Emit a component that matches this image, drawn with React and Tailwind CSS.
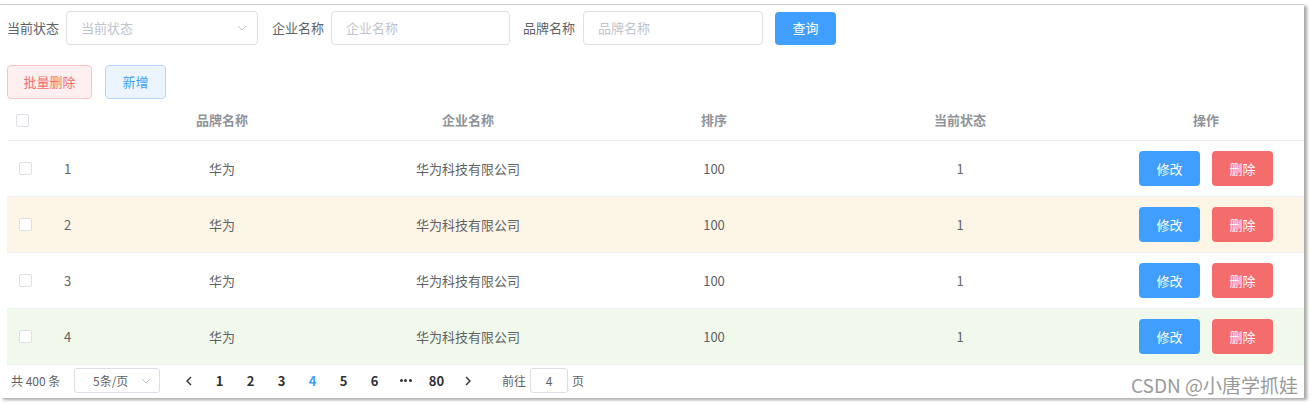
import React from "react";

const rows = [
  { id: 1, brand: "华为", company: "华为科技有限公司", order: 100, status: 1, bg: "bg-white" },
  { id: 2, brand: "华为", company: "华为科技有限公司", order: 100, status: 1, bg: "bg-[#fdf5e6]" },
  { id: 3, brand: "华为", company: "华为科技有限公司", order: 100, status: 1, bg: "bg-white" },
  { id: 4, brand: "华为", company: "华为科技有限公司", order: 100, status: 1, bg: "bg-[#f0f9eb]" },
];

const pages = ["1", "2", "3", "4", "5", "6", "more", "80"];

const Arrow = ({ className }) => (
  <svg className={className} width="10" height="6" viewBox="0 0 10 6" fill="none">
    <polyline points="1,1 5,5 9,1" stroke="#c0c4cc" strokeWidth="1" />
  </svg>
);

const Checkbox = () => (
  <span className="block w-[13px] h-[13px] border border-[#dcdfe6] rounded-[2px] bg-white" />
);

const Input = ({ placeholder, width }) => (
  <div
    className={`${width} h-[34px] border border-[#dcdfe6] rounded-[4px] flex items-center px-[14px] text-[13px] text-[#c0c4cc]`}
  >
    {placeholder}
  </div>
);

const App = () => {
  return (
    <div className="w-[1314px] h-[404px] bg-white pt-[4px] font-['Noto_Sans_CJK_SC',sans-serif]">
      <div className="relative w-[1304px] h-[394px] bg-white border-t border-[#cfcfcf] shadow-[3px_2px_3px_rgba(0,0,0,0.35)] overflow-hidden">
        {/* search form */}
        <div className="flex items-center mt-[6px] pl-[7px] h-[34px] text-[13px] text-[#606266]">
          <span className="w-[59px]">当前状态</span>
          <div className="w-[192px] h-[34px] border border-[#dcdfe6] rounded-[4px] flex items-center justify-between pl-[14px] pr-[10px] text-[#c0c4cc]">
            <span>当前状态</span>
            <Arrow />
          </div>
          <span className="ml-[14px] w-[59px]">企业名称</span>
          <Input placeholder="企业名称" width="w-[179px]" />
          <span className="ml-[13px] w-[60px]">品牌名称</span>
          <Input placeholder="品牌名称" width="w-[180px]" />
          <button className="ml-[12px] w-[61px] h-[33px] rounded-[4px] bg-[#409eff] text-white text-[13px]">
            查询
          </button>
        </div>

        {/* actions */}
        <div className="flex items-center gap-[13px] mt-[20px] pl-[7px]">
          <button className="w-[85px] h-[34px] rounded-[4px] bg-[#fef0f0] border border-[#fbc4c4] text-[#f56c6c] text-[13px]">
            批量删除
          </button>
          <button className="w-[61px] h-[34px] rounded-[4px] bg-[#ecf5ff] border border-[#b3d8ff] text-[#409eff] text-[13px]">
            新增
          </button>
        </div>

        {/* table */}
        <div className="mt-[1px] ml-[7px] w-[1322px] text-[13px]">
          <div className="grid grid-cols-[46px_46px_246px_246px_246px_246px_246px] h-[41px] items-center border-b border-[#ebeef5] font-bold text-[#909399]">
            <div className="pl-[9px]">
              <Checkbox />
            </div>
            <div />
            <div className="text-center">品牌名称</div>
            <div className="text-center">企业名称</div>
            <div className="text-center">排序</div>
            <div className="text-center">当前状态</div>
            <div className="text-center">操作</div>
          </div>
          {rows.map((row) => (
            <div
              key={row.id}
              className={`grid grid-cols-[46px_46px_246px_246px_246px_246px_246px] h-[56px] items-center border-b border-[#ebeef5] text-[#606266] ${row.bg}`}
            >
              <div className="pl-[12px]">
                <Checkbox />
              </div>
              <div className="pl-[11px]">{row.id}</div>
              <div className="text-center">{row.brand}</div>
              <div className="text-center">{row.company}</div>
              <div className="text-center">{row.order}</div>
              <div className="text-center">{row.status}</div>
              <div className="flex justify-center gap-[12px]">
                <button className="w-[61px] h-[35px] rounded-[4px] bg-[#409eff] text-white text-[13px]">
                  修改
                </button>
                <button className="w-[61px] h-[35px] rounded-[4px] bg-[#f56c6c] text-white text-[13px]">
                  删除
                </button>
              </div>
            </div>
          ))}
        </div>

        {/* pagination */}
        <div className="flex items-center h-[31px] pl-[11px] text-[12px] text-[#606266]">
          <span className="w-[63px]">共 400 条</span>
          <div className="w-[86px] h-[25px] border border-[#dcdfe6] rounded-[3px] flex items-center justify-between pl-[18px] pr-[8px] text-[12px]">
            <span>5条/页</span>
            <Arrow />
          </div>
          <div className="flex items-center ml-[13px] text-[13px] font-bold text-[#303133]">
            <span className="w-[31px] flex justify-center">
              <svg width="8" height="10" viewBox="0 0 8 10" fill="none">
                <polyline points="6,1 2,5 6,9" stroke="#303133" strokeWidth="1.4" />
              </svg>
            </span>
            {pages.map((p) =>
              p === "more" ? (
                <span key={p} className="w-[31px] flex justify-center items-center gap-[1.5px]">
                  <span className="w-[3px] h-[3px] rounded-full bg-[#303133]" />
                  <span className="w-[3px] h-[3px] rounded-full bg-[#303133]" />
                  <span className="w-[3px] h-[3px] rounded-full bg-[#303133]" />
                </span>
              ) : (
                <span
                  key={p}
                  className={`w-[31px] text-center ${p === "4" ? "text-[#409eff]" : ""}`}
                >
                  {p}
                </span>
              )
            )}
            <span className="w-[31px] flex justify-center">
              <svg width="8" height="10" viewBox="0 0 8 10" fill="none">
                <polyline points="2,1 6,5 2,9" stroke="#303133" strokeWidth="1.4" />
              </svg>
            </span>
          </div>
          <span className="ml-[19px]">前往</span>
          <div className="ml-[4px] w-[38px] h-[25px] border border-[#dcdfe6] rounded-[3px] flex items-center justify-center text-[12px]">
            4
          </div>
          <span className="ml-[4px]">页</span>
        </div>

        {/* watermark */}
        <span className="absolute right-[6px] top-[369px] text-[19px] leading-[22px] text-[#9a9a9a]">
          CSDN @小唐学抓娃
        </span>
      </div>
    </div>
  );
};

export default App;
